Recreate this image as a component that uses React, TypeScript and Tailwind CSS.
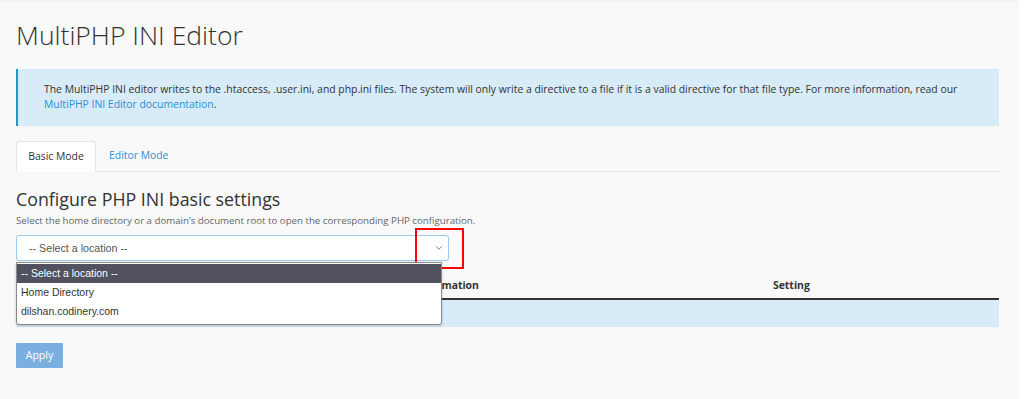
import { ChevronDown } from 'lucide-react';

export default function App() {
  return (
    <div className="min-h-screen bg-white flex font-['Open_Sans',sans-serif] text-[#333]">
      <div className="w-[1019px] min-h-[399px] bg-[#f9f9f9] pl-4 pr-5 pt-[14px] border-t-2 border-[#f3f3f3]">
        {/* Title */}
        <h1 className="text-[26.5px] font-light leading-[38px] text-[#333] mb-[15px]">MultiPHP INI Editor</h1>

        {/* Info alert */}
        <div className="bg-[#d7ebf8] border-l-2 border-[#1b97d8] pl-[26px] pr-4 pt-[13px] pb-[13px] text-[10.4px] leading-[15px] text-[#333] h-[57px]">
          The MultiPHP INI editor writes to the .htaccess, .user.ini, and php.ini files. The system will only write a
          directive to a file if it is a valid directive for that file type. For more information, read our{' '}
          <a className="text-[#2b8fd6]">MultiPHP INI Editor documentation</a>.
        </div>

        {/* Tabs */}
        <div className="flex mt-[15px] border-b border-[#e4e4e4] h-[31px]">
          <div className="bg-white border border-b-0 border-[#e6e6e6] rounded-t-[3px] w-[80px] flex items-center justify-center text-[10.4px] text-[#333] h-[31px]">
            Basic Mode
          </div>
          <div className="flex items-center px-[13px] text-[10.4px] text-[#2b8fd6]">Editor Mode</div>
        </div>

        {/* Section */}
        <h2 className="text-[17.8px] leading-[24px] mt-[15px] text-[#333]">Configure PHP INI basic settings</h2>
        <p className="text-[9.7px] leading-[14px] mt-[3px] text-[#666]">
          Select the home directory or a domain’s document root to open the corresponding PHP configuration.
        </p>

        {/* Select + popup */}
        <div className="relative mt-[7px] w-[433px]">
          <div className="h-[26px] bg-white border border-[#9cc9ef] rounded-[3px] flex items-center justify-between pl-3 pr-[4px] font-['Liberation_Sans',Arial,sans-serif] text-[10.7px] text-[#555]">
            <span>-- Select a location --</span>
            <ChevronDown className="w-[10px] h-[10px] text-[#666]" strokeWidth={2} />
          </div>
          {/* red highlight box */}
          <div className="absolute left-[399px] top-[-7px] w-[49px] h-[41px] border-2 border-[#ff0000]" />
          {/* native popup */}
          <div className="absolute left-0 top-[27px] w-[426px] bg-white border border-[#8a8a8a] rounded-b-[3px] shadow-[0_1px_3px_rgba(0,0,0,0.2)] z-10 font-['Liberation_Sans',Arial,sans-serif] text-[10.5px] text-[#333] pb-[3px]">
            <div className="bg-[#515160] text-white h-[19px] flex items-center px-[4px] mt-[1px]">-- Select a location --</div>
            <div className="h-[19px] flex items-center px-[4px]">Home Directory</div>
            <div className="h-[19px] flex items-center px-[4px]">dilshan.codinery.com</div>
          </div>
        </div>

        {/* Table */}
        <div className="mt-[13px] w-[983px]">
          <div className="flex h-[26px] items-center border-b-2 border-[#333] text-[10.4px] font-bold text-[#333]">
            <div className="w-[395px] pl-2">PHP Directive</div>
            <div className="w-[361px] pl-[5px]">Information</div>
            <div className="flex-1 pl-[1px]">Setting</div>
          </div>
          <div className="h-[27px] bg-[#d7ebf8]" />
        </div>

        {/* Apply */}
        <button className="mt-[16px] h-[25px] w-[47px] bg-[#7aafdf] text-white text-[10.5px] rounded-[1px] flex items-center justify-center">
          Apply
        </button>
      </div>
    </div>
  );
}
